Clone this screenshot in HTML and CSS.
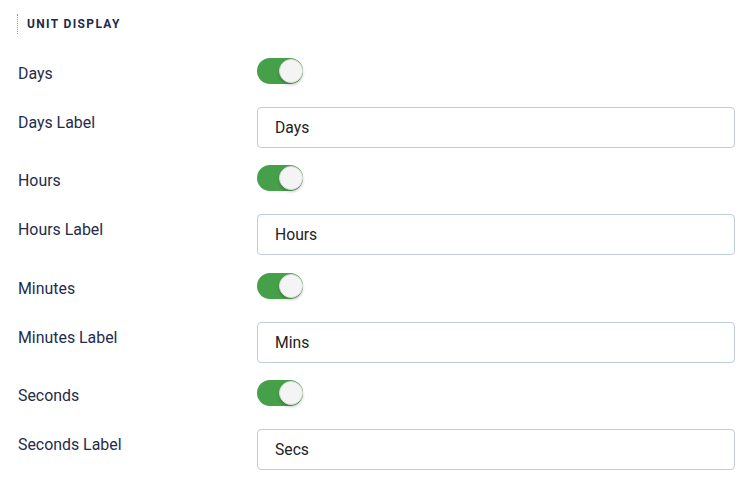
FILE: index.html
```html
<!DOCTYPE html>
<html lang="en">
<head>
  <meta charset="UTF-8">
  <title>Unit Display</title>
  <link rel="stylesheet" href="styles.css">
</head>
<body>
  <div class="panel">
    <h2 class="section-title">UNIT DISPLAY</h2>

    <div class="field toggle-row">
      <label class="field-label">Days</label>
      <span class="switch on"><span class="knob"></span></span>
    </div>
    <div class="field input-row">
      <label class="field-label">Days Label</label>
      <input class="text-input" type="text" value="Days">
    </div>

    <div class="field toggle-row">
      <label class="field-label">Hours</label>
      <span class="switch on"><span class="knob"></span></span>
    </div>
    <div class="field input-row">
      <label class="field-label">Hours Label</label>
      <input class="text-input" type="text" value="Hours">
    </div>

    <div class="field toggle-row">
      <label class="field-label">Minutes</label>
      <span class="switch on"><span class="knob"></span></span>
    </div>
    <div class="field input-row">
      <label class="field-label">Minutes Label</label>
      <input class="text-input" type="text" value="Mins">
    </div>

    <div class="field toggle-row">
      <label class="field-label">Seconds</label>
      <span class="switch on"><span class="knob"></span></span>
    </div>
    <div class="field input-row">
      <label class="field-label">Seconds Label</label>
      <input class="text-input" type="text" value="Secs">
    </div>
  </div>
</body>
</html>
```

FILE: styles.css
```css
body { margin: 0; background: #fff; font-family: Roboto, "Liberation Sans", sans-serif; }
.panel { padding: 14px 15px 0 18px; }

.section-title {
  margin: 0 0 24px -1px;
  padding-left: 9px;
  height: 20px;
  line-height: 20px;
  border-left: 1px dotted #9a9a9a;
  font-size: 12px;
  font-weight: 700;
  letter-spacing: 1.35px;
  color: #1b2a4e;
}

.field { display: grid; grid-template-columns: 239px 1fr; align-items: start; }
.field-label { font-size: 15.9px; line-height: 18px; color: #1f2c4c; }
.toggle-row { height: 26px; margin-bottom: 23px; }
.toggle-row .field-label { padding-top: 7px; }
.input-row { height: 41px; margin-bottom: 17.33px; }
.input-row .field-label { padding-top: 7px; }

.switch {
  position: relative;
  display: block;
  width: 46px;
  height: 26px;
  border-radius: 13px;
  background: #ccc;
}
.switch.on { background: #46a049; }
.knob {
  position: absolute;
  top: 1px;
  right: 0;
  width: 24px;
  height: 24px;
  border-radius: 50%;
  background: #f4f4f4;
  border: 1px solid #dcdcdc;
  box-sizing: border-box;
  box-shadow: 0 2px 3px rgba(0, 0, 0, 0.2);
}

.text-input {
  box-sizing: border-box;
  width: 100%;
  height: 41px;
  padding: 0 17px;
  border: 1px solid #bfcce0;
  border-radius: 4px;
  font-family: Roboto, "Liberation Sans", sans-serif;
  font-size: 15.7px;
  color: #222;
  background: #fff;
  outline: none;
}
```
